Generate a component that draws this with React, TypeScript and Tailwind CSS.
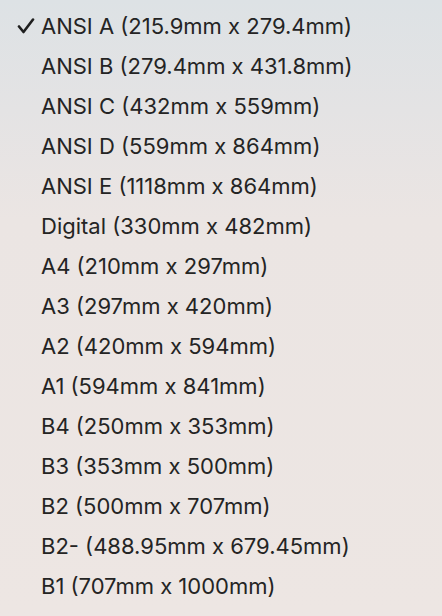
import React from "react";

const items = [
  "ANSI A (215.9mm x 279.4mm)",
  "ANSI B (279.4mm x 431.8mm)",
  "ANSI C (432mm x 559mm)",
  "ANSI D (559mm x 864mm)",
  "ANSI E (1118mm x 864mm)",
  "Digital (330mm x 482mm)",
  "A4 (210mm x 297mm)",
  "A3 (297mm x 420mm)",
  "A2 (420mm x 594mm)",
  "A1 (594mm x 841mm)",
  "B4 (250mm x 353mm)",
  "B3 (353mm x 500mm)",
  "B2 (500mm x 707mm)",
  "B2- (488.95mm x 679.45mm)",
  "B1 (707mm x 1000mm)",
];

export default function App() {
  return (
    <div
      className="w-[442px] h-[616px] overflow-hidden bg-[linear-gradient(180deg,#dde2e5_0px,#e4e3e4_110px,#ebe5e3_220px,#ede6e3_616px)] pt-[6px]"
      style={{ fontFamily: "Inter, 'Noto Sans', sans-serif" }}
    >
      {items.map((t, i) => (
        <div key={t} className="flex items-center h-[40.07px] text-[#242424] text-[22px]">
          <div className="w-[41px] flex justify-end pr-[6px]">
            {i === 0 && (
              <svg width="18" height="16" viewBox="0 0 18 16" fill="none">
                <path d="M2 8.5 L6.5 14 L16 1.5" stroke="#1f1f1f" strokeWidth="2.6" strokeLinecap="round" strokeLinejoin="round" />
              </svg>
            )}
          </div>
          <span>{t}</span>
        </div>
      ))}
    </div>
  );
}
